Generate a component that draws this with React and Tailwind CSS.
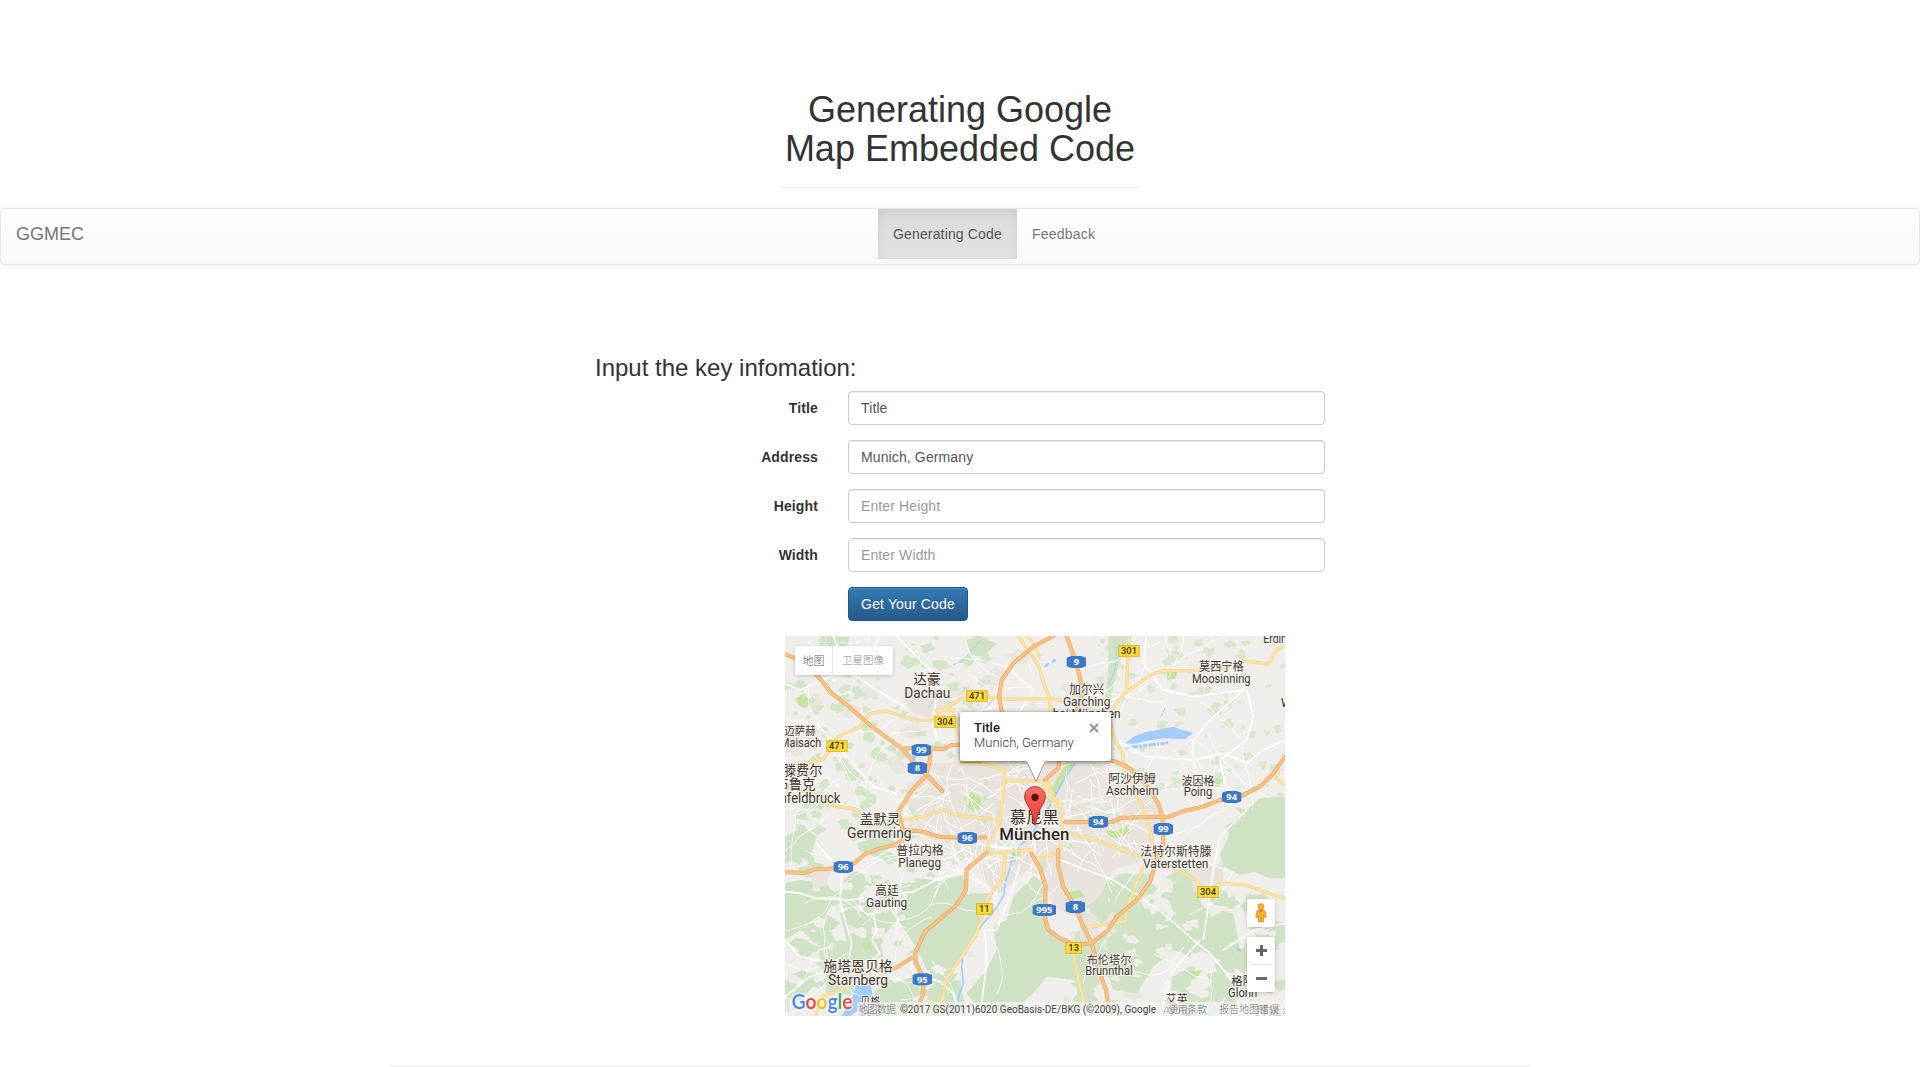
import React from "react";

const rand = (seed) => {
  let s = seed;
  return () => {
    s = (s * 16807) % 2147483647;
    return s / 2147483647;
  };
};

/* Ragged polygons used for woods and built-up patches */
const blobs = (seed, count, x0, y0, x1, y1, rMin, rMax) => {
  const r = rand(seed);
  const out = [];
  for (let i = 0; i < count; i++) {
    const cx = x0 + r() * (x1 - x0);
    const cy = y0 + r() * (y1 - y0);
    const size = rMin + r() * (rMax - rMin);
    const pts = [];
    for (let k = 0; k < 11; k++) {
      const a = (k / 11) * Math.PI * 2;
      const d = size * (0.45 + r() * 0.75);
      pts.push(`${(cx + Math.cos(a) * d).toFixed(0)},${(cy + Math.sin(a) * d * 0.8).toFixed(0)}`);
    }
    out.push(`M${pts.join("L")}Z`);
  }
  return out.join("");
};

/* Wandering lines used for small country roads and city streets */
const wander = (seed, count, x0, y0, x1, y1, steps, len) => {
  const r = rand(seed);
  const out = [];
  for (let i = 0; i < count; i++) {
    let x = x0 + r() * (x1 - x0);
    let y = y0 + r() * (y1 - y0);
    let a = r() * Math.PI * 2;
    let d = `M${x.toFixed(0)},${y.toFixed(0)}`;
    for (let k = 0; k < steps; k++) {
      a += (r() - 0.5) * 0.9;
      x += Math.cos(a) * len;
      y += Math.sin(a) * len;
      d += `L${x.toFixed(0)},${y.toFixed(0)}`;
    }
    out.push(d);
  }
  return out.join("");
};

const woods = [
  "M1365,530L1400,540L1440,505L1515,500V745L1470,745L1420,725L1380,735L1325,705L1322,670L1350,610L1335,590L1385,555Z",
  "M400,765L425,745L480,755L550,735L560,790L640,790L612,860L590,920L540,990L490,1045L440,1020L415,960L360,880L350,850L395,830L410,790Z",
  "M700,800L760,738L790,760L795,880L850,935L905,945L940,1000L960,1060L925,1090L880,1050L800,1040L760,1090L700,1140L600,1140L560,1090L620,1020L650,960L640,890L680,870Z",
  "M1040,890L1075,840L1110,860L1130,900L1200,880L1250,930L1230,980L1180,960L1120,1010L1070,1090L1000,1080L975,1010L985,930Z",
  "M960,740L1050,755L1070,800L1040,850L1000,850L985,800L950,780Z",
  "M1180,760L1240,770L1270,830L1360,850L1380,960L1340,1000L1260,960L1200,870L1170,820Z",
  "M15,760L60,750L140,760L170,800L140,850L180,880L120,930L60,900L15,930Z",
  "M180,850L220,830L260,860L330,840L350,870L300,930L310,980L230,990L200,930Z",
  "M15,620L70,590L110,620L90,680L40,690L15,670Z",
  "M230,640L320,615L350,640L290,680L240,665Z",
  "M460,1060L540,1050L560,1158H440Z",
  "M290,1080L400,1040L420,1080L380,1158H270Z",
  "M985,18H1045L1015,110L1000,170L985,240L970,240L985,120Z",
  "M15,1040L70,1020L110,1060L60,1110L15,1100Z",
  "M560,30L600,18L650,40L610,80L570,75Z",
  "M120,18L210,20L200,50L150,60Z",
];

const parks = [
  "M862,395L882,402L835,485L808,520L800,505L825,455Z",
  "M550,505L570,485L600,500L605,525L580,545L560,530Z",
  "M980,600L1010,605L1040,585L1050,610L1010,625L985,620Z",
  "M50,205L70,190L95,215L75,235L55,225Z",
  "M850,790L900,780L915,800L870,808Z",
  "M1160,120L1195,122L1185,145L1160,150Z",
  "M700,660L722,665L705,700L692,690Z",
  "M1305,445L1325,448L1320,470L1305,470Z",
  "M1225,1025L1265,1020L1255,1040L1235,1042Z",
  "M245,945L275,935L270,955L255,962Z",
];

const city = [
  "M380,470L450,400L540,395L680,370L850,380L960,400L1010,460L1120,500L1140,580L1100,690L1000,720L960,800L880,860L820,830L790,740L740,720L660,790L620,770L590,690L520,670L440,650L390,600Z",
  "M380,180L470,175L510,230L440,260L380,240Z",
  "M850,210L930,205L960,300L920,330L870,300Z",
  "M360,640L420,650L540,640L540,690L420,700Z",
  "M1230,720L1330,700L1330,760L1240,790Z",
  "M90,710L150,725L140,770L100,775Z",
  "M900,820L950,860L960,940L900,930Z",
  "M130,1020L260,1010L290,1060L200,1070Z",
];

const motorways = [
  "M15,72L45,85L115,140L155,190L205,228L270,285L365,355L410,405L440,435L487,483",
  "M365,356L430,353L490,358L515,345L560,343",
  "M452,360L447,405L437,438L395,482L355,545L366,590L370,628L345,645L300,655L255,672L212,708L160,713L140,718L105,718L75,728L15,727",
  "M375,600L430,605L475,620L560,624L615,622",
  "M820,18L760,50L700,100L665,150L657,200L668,260",
  "M860,18L880,75L898,135L908,190L890,245",
  "M980,388L1010,396L1050,415L1100,465L1135,520L1148,565L1150,640L1130,690L1110,755L1070,810L1010,860L985,900L935,940L890,945L840,925L805,900L795,865L797,770L780,715L755,672",
  "M855,577L1000,575L1025,563L1170,560L1210,543L1270,530L1320,510L1385,497L1440,470L1480,430L1515,380",
  "M835,660L835,710L850,770L885,830L910,890L935,940L960,1030L978,1080L990,1158",
  "M620,668L560,718L558,780L530,825L435,905L405,970L408,1000L430,1040L430,1090L405,1158",
  "M393,985L345,1015L285,1020",
  "M838,390L835,415L795,450",
];

const mainRoads = [
  "M15,405L80,398L130,388L155,350L175,320L240,290L270,250L320,243L400,270L455,272L485,240L550,205L620,200L690,208L800,206L860,212",
  "M470,240L520,240L530,300L560,360L600,400L675,420L668,500L660,575L625,640L623,670L750,660L768,688L838,668L847,600L840,520L805,490L785,452L680,453",
  "M365,572L430,560L490,540L530,555L655,570",
  "M15,470L100,490L145,525L225,537L250,562L290,590",
  "M715,18L750,70L775,105L795,170L808,200L812,250",
  "M1048,18L1042,110L1040,180L1000,235L990,270L1000,320L1028,370L1035,420L1060,470L1095,550L1115,620L1120,670",
  "M1040,185L1110,135L1150,122L1240,122L1330,115L1380,92L1465,102L1490,60L1515,45",
  "M870,610L950,630L1000,650L1060,672L1130,685L1200,725L1250,752L1265,780L1300,772L1330,760L1400,765L1450,785L1515,805",
  "M675,670L672,740L625,800L610,850L590,910L545,980L495,1055L490,1100L465,1158",
  "M880,945L885,1000L900,1070L925,1158",
  "M915,893L1035,875L1045,820L1065,770L1095,700",
  "M270,1025L235,1035L180,1080L120,1105L108,1158",
  "M765,690L785,720",
  "M740,18L760,40L778,80",
  "M1480,440L1515,465",
  "M805,455L830,530",
];

const localRoads = [
  "M15,785L60,790L110,805L210,810L280,800L400,785L480,745L560,720",
  "M110,640L160,700L185,740L180,810L195,870L215,940L205,1000",
  "M280,850L290,900L275,930L300,970L260,1000L240,1035",
  "M15,930L60,980L150,1000L240,990",
  "M720,700L700,770L650,900L615,900L620,1000L600,1158",
  "M840,690L1000,750L1080,800L1150,850L1240,930L1290,970L1380,1080",
  "M1270,930L1280,860L1300,720L1320,620L1400,540",
  "M1240,390L1240,330L1290,270L1390,180L1370,120",
  "M1240,390L1330,370L1400,400L1450,360L1515,330",
  "M1400,180L1420,260L1400,330L1320,390L1340,480",
  "M1010,330L1100,380L1240,390L1250,440",
  "M160,18L200,120L290,180L390,240",
  "M350,18L420,90L480,150L460,260L470,330",
  "M15,160L60,180L150,140L260,90L300,18",
  "M690,120L760,180L720,245",
  "M790,560L720,590L690,660L590,640",
  "M1330,960L1420,900L1515,880",
  "M1260,930L1180,1020L1140,1158",
  "M390,985L400,1030L480,1055L520,1090L540,1158",
  "M15,270L110,280L200,380L280,470L350,490",
  "M500,280L560,320L590,245L650,230",
  "M1100,18L1090,100L1150,180L1240,200L1390,180",
  "M15,1100L90,1040L200,1000",
];

const water = [
  "M1035,340L1060,320L1090,308L1180,290L1200,298L1240,308L1215,328L1150,325L1100,332L1060,342Z",
  "M228,1065H272L278,1090L268,1118L210,1158H185L215,1110Z",
  "M1366,950L1378,955L1385,965L1370,962Z",
  "M400,372L412,378L402,392L392,384Z",
  "M820,85L830,92L815,100Z",
  "M795,102L808,98L802,110L792,112Z",
];

const river =
  "M885,400L850,450L820,510L770,590L738,632L715,650L695,685L690,715L675,760L672,795L650,832L640,845L610,880L588,910L572,940L548,980L545,1010L550,1060L535,1100L530,1158";

const Yellow = ({ x, y, w = 64, t }) => (
  <g>
    <rect x={x - w / 2 + 1.5} y={y - 16} width={w - 3} height={32} fill="#fbdc3b" stroke="#dcb61f" strokeWidth="3" />
    <text x={x} y={y + 10} textAnchor="middle" fontSize="28" fill="#3c3514" fontWeight="500" fontFamily="Roboto, sans-serif">
      {t}
    </text>
  </g>
);

const Blue = ({ x, y, w = 58, t }) => (
  <g>
    <path
      d={`M${x - w / 2},${y - 13}L${x - w / 4},${y - 18}H${x + w / 4}L${x + w / 2},${y - 13}V${y + 13}L${x + w / 4},${y + 18}H${x - w / 4}L${x - w / 2},${y + 13}Z`}
      fill="#3b78c8"
    />
    <text x={x} y={y + 10} textAnchor="middle" fontSize="28" fill="#fff" fontWeight="700" fontFamily="'Open Sans', sans-serif">
      {t}
    </text>
  </g>
);

const Label = ({ x, y, w, t, s = 36, b, c = "#3c3830" }) => (
  <text
    x={x}
    y={y}
    textAnchor="middle"
    fontSize={s}
    fontWeight={b ? 500 : 400}
    fill={c}
    stroke="#f5f3ee"
    strokeWidth="6"
    strokeLinejoin="round"
    paintOrder="stroke"
    textLength={w}
    lengthAdjust="spacingAndGlyphs"
    fontFamily="Roboto, 'Noto Sans CJK SC', sans-serif"
  >
    {t}
  </text>
);

const labels = [
  [441, 162, 82, "达豪", 41],
  [442, 205, 138, "Dachau", 43],
  [920, 193, 106, "加尔兴", 36],
  [920, 229, 142, "Garching", 37],
  [920, 265, 204, "bei München", 37],
  [1324, 123, 134, "莫西宁格", 36],
  [1324, 158, 176, "Moosinning", 37],
  [60, 316, 94, "迈萨赫", 35],
  [62, 352, 124, "Maisach", 37],
  [68, 434, 118, "滕费尔", 41],
  [26, 477, 160, "德布鲁克", 41],
  [36, 520, 290, "Fürstenfeldbruck", 42],
  [300, 582, 122, "盖默灵", 42],
  [298, 625, 194, "Germering", 42],
  [420, 676, 142, "普拉内格", 36],
  [419, 712, 128, "Planegg", 37],
  [321, 796, 70, "高廷", 36],
  [320, 832, 124, "Gauting", 37],
  [234, 1023, 208, "施塔恩贝格", 42],
  [234, 1066, 180, "Starnberg", 42],
  [271, 1126, 60, "贝格", 32],
  [271, 1158, 64, "Berg", 35],
  [1056, 460, 142, "阿沙伊姆", 36],
  [1057, 496, 158, "Aschheim", 37],
  [1254, 464, 98, "波因格", 35],
  [1254, 499, 86, "Poing", 37],
  [1188, 679, 214, "法特尔斯特滕", 36],
  [1187, 715, 196, "Vaterstetten", 37],
  [987, 1003, 134, "布伦塔尔", 35],
  [987, 1036, 142, "Brunnthal", 37],
  [1388, 1066, 68, "格隆", 35],
  [1388, 1101, 88, "Glonn", 37],
  [1190, 1120, 66, "艾英", 34],
  [1190, 1152, 84, "Aying", 35],
  [1494, 39, 88, "Erding", 36],
  [1530, 231, 56, "Wö", 36],
  [1485, 1154, 120, "拜延尔", 34],
];

function MapTiles() {
  return (
    <svg viewBox="15 18 1500 1140" className="block h-full w-full">
      <rect x="15" y="18" width="1500" height="1140" fill="#f0eeea" />
      <path d={blobs(91, 60, 15, 18, 1515, 1158, 12, 42)} fill="#e9e6e0" />
      <path d={blobs(17, 130, 15, 18, 650, 640, 5, 26)} fill="#d5e5ca" />
      <path d={blobs(29, 90, 900, 18, 1515, 500, 4, 22)} fill="#d8e7ce" />
      <path d={blobs(11, 95, 15, 620, 560, 1158, 10, 48)} fill="#d0e3c6" />
      <path d={blobs(47, 75, 900, 740, 1515, 1158, 12, 60)} fill="#d0e3c6" />
      <path d={woods.join("")} fill="#cfe2c4" />
      <path d={blobs(67, 26, 30, 700, 480, 1120, 8, 26)} fill="#efede7" />
      <path d={blobs(83, 26, 960, 820, 1490, 1120, 8, 30)} fill="#efede7" />
      <path d={city.join("")} fill="#e8e4dd" />
      <path d={blobs(131, 36, 400, 400, 1110, 760, 4, 15)} fill="#d4e5c4" />
      <path d={parks.join("")} fill="#c5e2a2" />
      <path d={water.join("")} fill="#a3ccff" />
      <path d="M1037,354L1165,338" stroke="#a3ccff" strokeWidth="9" strokeDasharray="12 4 22 3 7 5" fill="none" />
      <path d={river} stroke="#a3ccff" strokeWidth="5" fill="none" />
      <path d="M1012,50L1005,120L985,165M598,35L550,90L510,110M640,205L605,255M1155,235L1140,265M445,235L462,205" stroke="#a3ccff" strokeWidth="3" strokeDasharray="12 4" fill="none" />
      <path d={wander(151, 90, 15, 18, 1515, 1158, 7, 28)} stroke="#fff" strokeWidth="2.4" fill="none" strokeLinejoin="round" opacity="0.85" />
      <path d={wander(211, 120, 430, 410, 1080, 740, 5, 24)} stroke="#fff" strokeWidth="2.6" fill="none" strokeLinejoin="round" />
      <path d={localRoads.join("")} stroke="#fff" strokeWidth="5" fill="none" strokeLinejoin="round" />
      <g fill="none" strokeLinejoin="round" strokeLinecap="round">
        <path d={mainRoads.join("")} stroke="#f0d290" strokeWidth="10" />
        <path d={mainRoads.join("")} stroke="#fde3a3" strokeWidth="7" />
        <path d={motorways.join("")} stroke="#eda35e" strokeWidth="12" />
        <path d={motorways.join("")} stroke="#fac386" strokeWidth="8" />
      </g>
      {labels.map(([x, y, w, t, s]) => (
        <Label key={t} x={x} y={y} w={w} t={t} s={s} />
      ))}
      <Label x={763} y={579} w={148} t="慕尼黑" s={49} c="#332f28" />
      <Label x={763} y={629} w={210} t="München" s={49} b c="#2b2721" />
      <Yellow x={1047} y={63} t="301" />
      <Yellow x={591} y={198} t="471" />
      <Yellow x={495} y={276} t="304" />
      <Yellow x={171} y={348} t="471" />
      <Yellow x={573} y={382} t="304" />
      <Yellow x={1284} y={786} t="304" />
      <Yellow x={613} y={837} w={50} t="11" />
      <Yellow x={881} y={954} w={50} t="13" />
      <Blue x={889} y={96} t="9" />
      <Blue x={424} y={360} t="99" />
      <Blue x={412} y={414} t="8" />
      <Blue x={562} y={624} t="96" />
      <Blue x={190} y={711} t="96" />
      <Blue x={955} y={576} t="94" />
      <Blue x={1355} y={501} t="94" />
      <Blue x={1150} y={597} t="99" />
      <Blue x={793} y={840} w={70} t="995" />
      <Blue x={886} y={831} t="8" />
      <Blue x={427} y={1048} t="95" />
    </svg>
  );
}

function Pin() {
  return (
    <svg viewBox="0 0 66 120" className="absolute left-[239px] top-[150px] h-[40px] w-[22px]">
      <defs>
        <linearGradient id="pin" x1="0" y1="0" x2="0" y2="1">
          <stop offset="0" stopColor="#fb7064" />
          <stop offset="1" stopColor="#e8352b" />
        </linearGradient>
      </defs>
      <path
        d="M33,2C15,2 2,16 2,33C2,54 26,66 31,116Q33,120 35,116C40,66 64,54 64,33C64,16 51,2 33,2Z"
        fill="url(#pin)"
        stroke="#b2312a"
        strokeWidth="3"
      />
      <circle cx="33" cy="34" r="11" fill="#5d0f0b" />
    </svg>
  );
}

function InfoWindow() {
  return (
    <div className="absolute left-[175px] top-[76px] h-[49px] w-[151px] rounded-[2px] bg-white font-[Roboto,sans-serif] text-[13px] leading-[15px] shadow-[0_1px_5px_rgba(0,0,0,0.6)]">
      <svg viewBox="0 0 20 22" className="absolute left-[66px] top-[48px] h-[22px] w-[20px] overflow-visible">
        <path d="M0.5,1L10,21.5L19.5,1" fill="#fff" stroke="#999" strokeWidth="1" />
        <path d="M0,0H20V1.5H0Z" fill="#fff" />
      </svg>
      <div className="pl-[14px] pt-[8px]">
        <div className="font-medium text-[#222]">Title</div>
        <div className="font-light text-[#333]">Munich, Germany</div>
      </div>
      <svg viewBox="0 0 10 10" className="absolute right-[12.5px] top-[10.5px] h-[10px] w-[10px]">
        <path d="M1,1L9,9M9,1L1,9" stroke="#999" strokeWidth="2.2" />
      </svg>
    </div>
  );
}

function Pegman() {
  return (
    <svg viewBox="0 0 36 60" className="h-[20px] w-[12px]">
      <path d="M6,24Q18,16 30,24L34,42L29,44L26,36V57H19.500V44H16.500V57H10V36L7,44L2,42Z" fill="#fbb229" stroke="#c98a1b" strokeWidth="2" />
      <circle cx="18" cy="11" r="9" fill="#fbb229" stroke="#c98a1b" strokeWidth="2" />
      <path d="M12,21L18,29L24,21Z" fill="#e5702a" />
    </svg>
  );
}

function GoogleMap() {
  return (
    <div className="relative ml-[785px] h-[380px] w-[500px] overflow-hidden">
      <MapTiles />
      <div className="absolute left-[10px] top-[10px] flex h-[29px] w-[98px] items-center rounded-[2px] bg-white font-['Noto_Sans_CJK_SC',sans-serif] text-[11px] font-light leading-none text-[#555] shadow-[0_1px_4px_-1px_rgba(0,0,0,0.3)]">
        <span className="flex h-full w-[38px] items-center justify-center border-r border-[#e6e6e6]">地图</span>
        <span className="flex-1 text-center text-[10.5px] text-[#888]">卫星图像</span>
      </div>
      <Pin />
      <InfoWindow />
      <div className="absolute left-[462px] top-[263px] flex h-[28px] w-[28px] items-center justify-center rounded-[2px] bg-white shadow-[0_1px_4px_-1px_rgba(0,0,0,0.3)]">
        <Pegman />
      </div>
      <div className="absolute left-[462px] top-[301px] flex h-[55px] w-[28px] flex-col items-center rounded-[2px] bg-white shadow-[0_1px_4px_-1px_rgba(0,0,0,0.3)]">
        <svg viewBox="0 0 28 55" className="h-[55px] w-[28px]">
          <path d="M9,13.500H20M14.500,8V19M9,41.500H20" stroke="#666" strokeWidth="3" />
          <path d="M4.500,27.500H23.500" stroke="#e6e6e6" strokeWidth="1" />
        </svg>
      </div>
      <div className="absolute bottom-0 right-0 flex h-[14px] w-[428px] items-center whitespace-nowrap bg-[#f5f5f5]/70 font-[Roboto,'Noto_Sans_CJK_SC',sans-serif] text-[10px] leading-[14px] text-[#444]">
        <svg viewBox="0 0 428 14" className="h-full w-full">
          <text x="1" y="11" textLength="38" fill="#777" fontWeight="300">地图数据</text>
          <text x="43" y="10.500" textLength="256" lengthAdjust="spacingAndGlyphs" fill="#444">©2017 GS(2011)6020 GeoBasis-DE/BKG (©2009), Google</text>
          <text x="311" y="11" textLength="39" fill="#777" fontWeight="300">使用条款</text>
          <text x="362" y="11" textLength="60" fill="#777" fontWeight="300">报告地图错误</text>
        </svg>
      </div>
      <svg viewBox="0 0 66 26" className="absolute left-[5px] top-[355px] h-[26px] w-[66px]">
        <text
          x="1.500"
          y="18"
          fontSize="20.500"
          fontWeight="600"
          textLength="61"
          lengthAdjust="spacingAndGlyphs"
          fontFamily="Lato, sans-serif"
          stroke="#fff"
          strokeOpacity="0.8"
          strokeWidth="2.500"
          paintOrder="stroke"
        >
          <tspan fill="#4285f4">G</tspan>
          <tspan fill="#ea4335">o</tspan>
          <tspan fill="#fbbc05">o</tspan>
          <tspan fill="#4285f4">g</tspan>
          <tspan fill="#34a853">l</tspan>
          <tspan fill="#ea4335">e</tspan>
        </text>
      </svg>
    </div>
  );
}

function Field({ label, value, placeholder }) {
  return (
    <div className="mb-[15px] flex tracking-[0.12px]">
      <label className="mr-[30px] w-[223px] pt-[7px] text-right font-bold">{label}</label>
      <input
        className="h-[34px] w-[477px] rounded-[4px] border border-[#ccc] bg-white px-3 py-[6px] text-[#555] shadow-[inset_0_1px_1px_rgba(0,0,0,0.075)] outline-none placeholder:text-[#999]"
        defaultValue={value}
        placeholder={placeholder}
      />
    </div>
  );
}

export default function App() {
  return (
    <div className="h-[1067px] w-full overflow-hidden bg-white font-['Liberation_Sans',Arial,sans-serif] text-[14px] leading-[20px] text-[#333]">
      <header className="mx-auto h-[188px] w-[360px] border-b border-[#eee] pt-[90px]">
        <h1 className="text-center text-[36px] font-medium leading-[39px]">
          Generating Google
          <br />
          Map Embedded Code
        </h1>
      </header>

      <nav className="mt-5 flex h-[57px] rounded-[4px] border border-[#e7e7e7] bg-linear-to-b from-white to-[#f8f8f8] text-[#777] shadow-[inset_0_1px_0_rgba(255,255,255,0.15),0_1px_5px_rgba(0,0,0,0.075)]">
        <a className="w-[877px] p-[15px] text-[18px]">GGMEC</a>
        <a className="h-[50px] w-[139px] whitespace-nowrap bg-linear-to-b from-[#dbdbdb] to-[#e2e2e2] p-[15px] tracking-[0.15px] text-[#555] shadow-[inset_0_3px_9px_rgba(0,0,0,0.075)]">
          Generating Code
        </a>
        <a className="p-[15px] tracking-[0.2px]">Feedback</a>
      </nav>

      <main className="mt-[90px]">
        <section className="ml-[595px]">
          <h3 className="mb-[10px] h-[26px] text-[24px] font-medium leading-[26px]">Input the key infomation:</h3>
          <Field label="Title" value="Title" />
          <Field label="Address" value="Munich, Germany" />
          <Field label="Height" placeholder="Enter Height" />
          <Field label="Width" placeholder="Enter Width" />
          <button className="mb-[15px] ml-[253px] block h-[34px] w-[120px] rounded-[4px] border border-[#245580] bg-linear-to-b from-[#337ab7] to-[#265a88] tracking-[0.15px] text-white shadow-[inset_0_1px_0_rgba(255,255,255,0.15),0_1px_1px_rgba(0,0,0,0.075)] [text-shadow:0_-1px_0_rgba(0,0,0,0.2)]">
            Get Your Code
          </button>
        </section>
        <GoogleMap />
      </main>

      <hr className="mx-auto mt-[50px] w-[1140px] border-[#eee]" />
    </div>
  );
}
